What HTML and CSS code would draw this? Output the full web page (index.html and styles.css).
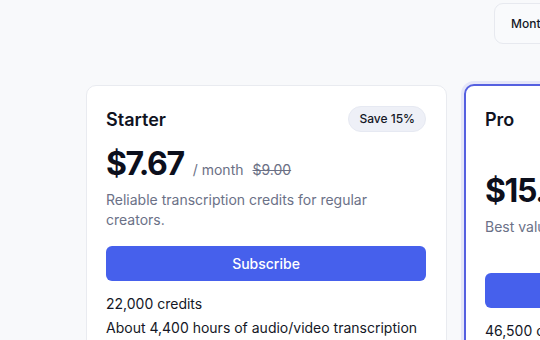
FILE: index.html
```html
<!DOCTYPE html>
<html>
<head>
<meta charset="utf-8">
<link rel="stylesheet" href="styles.css">
</head>
<body>
<div class="page">
  <div class="toggle-row">
    <div class="toggle">
      <span class="toggle-opt active">Monthly</span>
      <span class="toggle-opt">Yearly</span>
    </div>
  </div>
  <div class="cards">
    <div class="card">
      <div class="card-head">
        <h2 class="title">Starter</h2>
        <div class="badges"><span class="badge">Save 15%</span></div>
      </div>
      <div class="price-row">
        <span class="price">$7.67</span>
        <span class="per">/ month</span>
        <span class="old">$9.00</span>
      </div>
      <p class="desc">Reliable transcription credits for regular creators.</p>
      <button class="btn">Subscribe</button>
      <ul class="features">
        <li>22,000 credits</li>
        <li>About 4,400 hours of audio/video transcription</li>
      </ul>
    </div>
    <div class="card featured">
      <div class="card-head">
        <h2 class="title">Pro</h2>
        <div class="badges"><span class="badge accent">Most popular</span><span class="badge">Save 15%</span></div>
      </div>
      <div class="price-row">
        <span class="price">$15.30</span>
        <span class="per">/ month</span>
        <span class="old">$18.00</span>
      </div>
      <p class="desc">Best value for power users.</p>
      <button class="btn">Subscribe</button>
      <ul class="features">
        <li>46,500 credits</li>
        <li>About 9,300 hours of audio/video transcription</li>
      </ul>
    </div>
  </div>
</div>
</body>
</html>
```
FILE: styles.css
```css
* { box-sizing: border-box; }
html, body { margin: 0; padding: 0; }
body {
  background: #f8f9fb;
  font-family: Inter, "Noto Sans", sans-serif;
  color: #0f1222;
  width: 540px;
  height: 340px;
  overflow: hidden;
}
.page { width: 1300px; }
.toggle-row {
  padding: 3px 0 0 494px;
}
.toggle {
  display: inline-flex;
  gap: 4px;
  padding: 4px;
  border: 1px solid #e7e9ef;
  border-radius: 9px;
  background: #f9fafc;
  height: 41px;
  align-items: center;
}
.toggle-opt {
  font-size: 12px;
  font-weight: 500;
  padding: 0 12px;
  color: #141726;
}
.cards {
  display: flex;
  gap: 17px;
  padding: 41px 0 0 86px;
}
.card {
  width: 361px;
  background: #fff;
  border: 1px solid #e9ebf0;
  border-radius: 10px;
  padding: 20px 20px 20px 19px;
}
.card.featured {
  border: 2px solid #5560e0;
  box-shadow: 0 0 0 3px rgba(99, 102, 241, 0.12);
  padding: 19px 19px;
  margin-top: -1px;
}
.card-head {
  display: flex;
  justify-content: space-between;
  align-items: flex-start;
}
.title {
  margin: 2px 0 0 0;
  font-size: 18px;
  font-weight: 600;
  line-height: 24px;
  color: #10131f;
}
.featured .title { margin-top: 3px; }
.badges {
  display: flex;
  flex-direction: column;
  align-items: flex-end;
  gap: 2px;
}
.badge {
  display: inline-block;
  font-size: 12px;
  font-weight: 500;
  line-height: 16px;
  padding: 4px 10px;
  border-radius: 999px;
  background: #eef0f7;
  border: 1px solid #e6e9f2;
  color: #141726;
}
.badge.accent { background: #4660ec; color: #fff; border-color: #4660ec; }
.price-row {
  display: flex;
  align-items: baseline;
  gap: 9px;
  margin-top: 13px;
}
.price {
  font-size: 32px;
  font-weight: 700;
  line-height: 38px;
  letter-spacing: -1.4px;
  color: #0c0f1c;
}
.per {
  font-size: 14px;
  color: #6b7085;
}
.old {
  font-size: 14px;
  color: #6b7085;
  text-decoration: line-through;
}
.desc {
  margin: 7px 0 0 0;
  font-size: 14px;
  line-height: 20px;
  min-height: 40px;
  color: #6b7187;
}
.btn {
  display: block;
  width: 100%;
  margin-top: 16px;
  height: 35px;
  border: none;
  border-radius: 6px;
  background: #4660ec;
  color: #fff;
  font-family: inherit;
  font-size: 14px;
  font-weight: 500;
}
.features {
  list-style: none;
  margin: 11px 0 0 0;
  padding: 0;
  font-size: 14px;
  line-height: 24px;
  color: #141726;
}
```
